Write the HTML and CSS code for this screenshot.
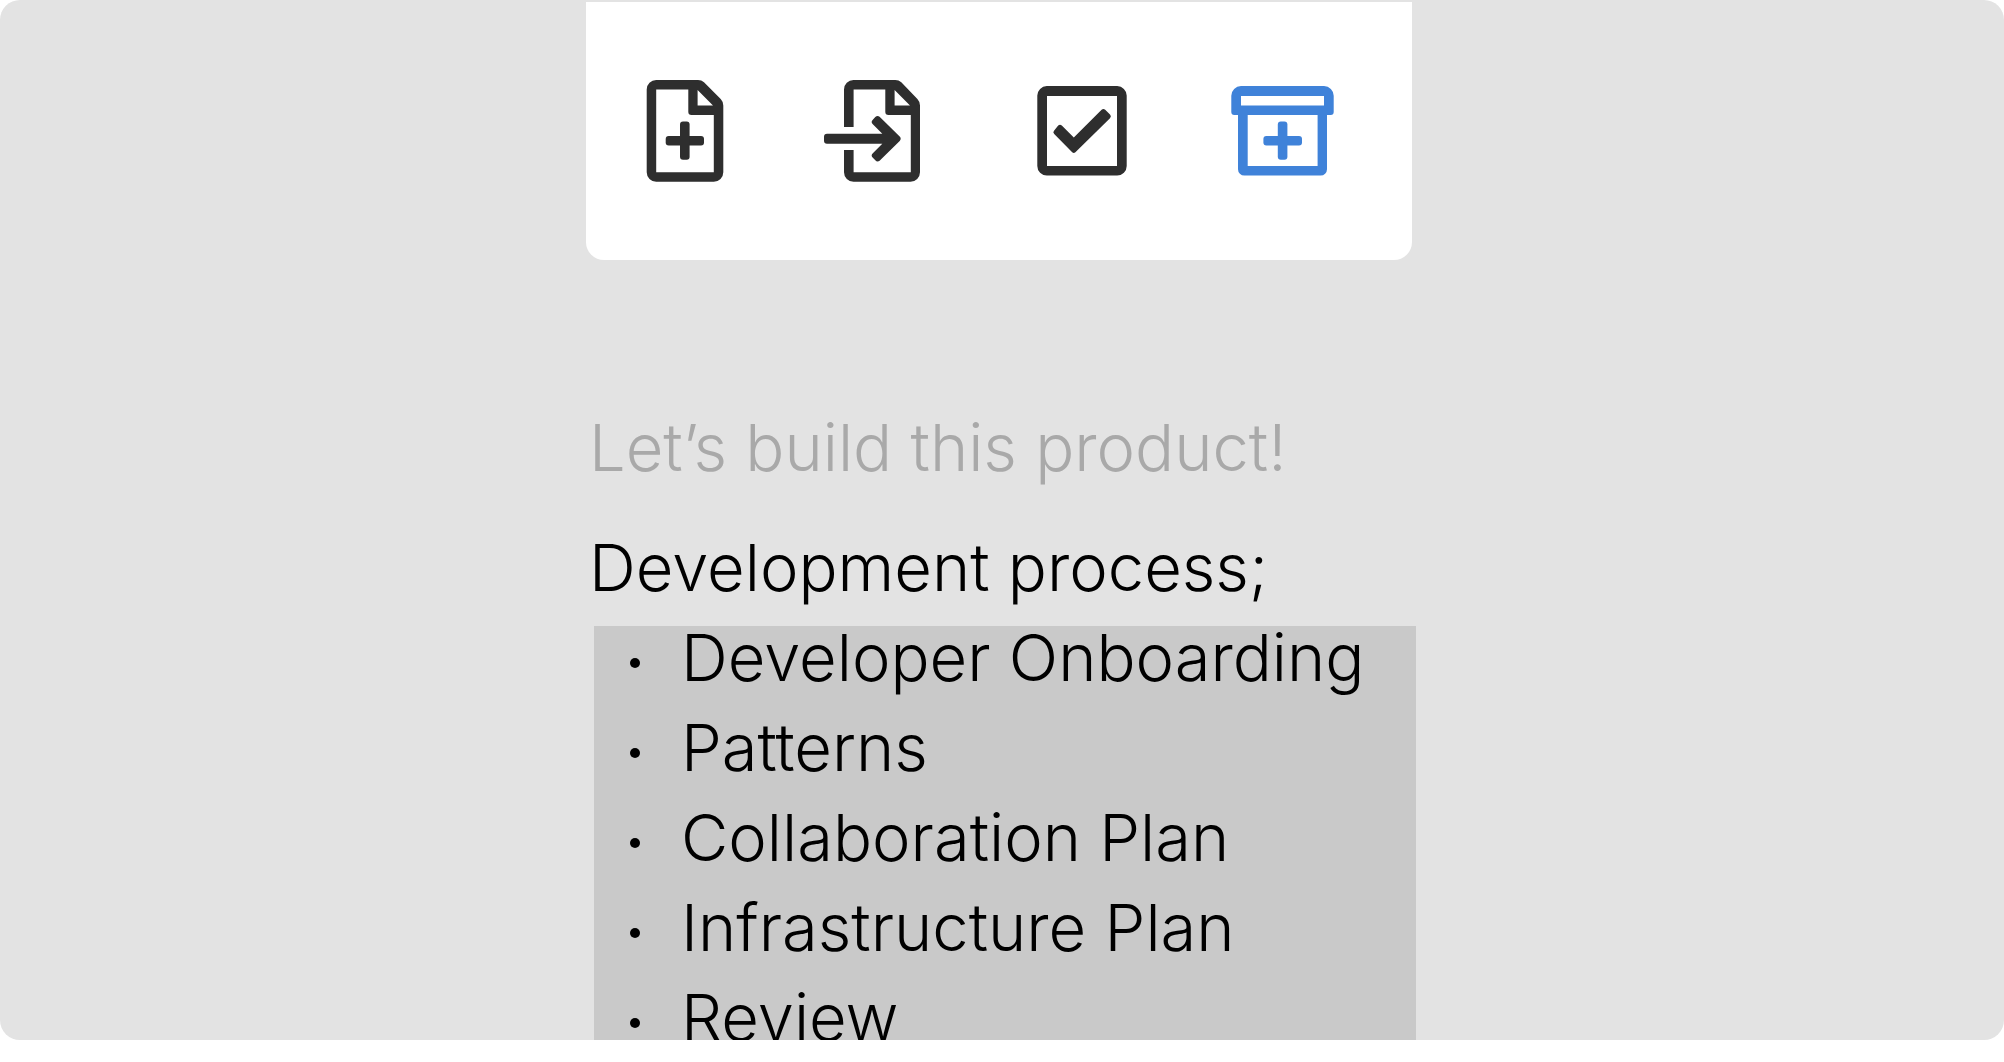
FILE: index.html
```html
<!DOCTYPE html>
<html lang="en">
<head>
  <meta charset="UTF-8" />
  <meta name="viewport" content="width=device-width,initial-scale=1.0" />
  <title>Let’s build this product!</title>
  <link rel="stylesheet" href="styles.css">
</head>

<body>
  <main class="canvas">
    <div class="column">

      <!-- Toolbar -->
      <div class="toolbar" role="toolbar" aria-label="Document actions">
        <button class="tool" type="button" aria-label="New document">
          <svg viewBox="0 0 128 128" aria-hidden="true">
            <path fill-rule="evenodd" d="M36.2 13H78Q81.5 13 84 15.3L100.7 32Q103.3 34.7 103.3 38.5V105.2A9.5 9.5 0 0 1 93.8 114.7H36.2A9.5 9.5 0 0 1 26.7 105.2V22.5A9.5 9.5 0 0 1 36.2 13ZM36.2 22.5V105.2H93.8V48H71.5A3.2 3.2 0 0 1 68.3 44.8V22.5ZM77.6 23V38.5H93Z"/>
            <rect x="45.7" y="69" width="38.3" height="9.6" rx="3"/>
            <rect x="60" y="54.5" width="9.6" height="38.3" rx="3"/>
          </svg>
        </button>
        <button class="tool" type="button" aria-label="Import document">
          <svg viewBox="0 0 128 128" aria-hidden="true">
            <path fill-rule="evenodd" d="M24 60V22.5A9.5 9.5 0 0 1 33.5 13H75.3Q78.8 13 81.3 15.3L97.4 32Q100 34.7 100 38.5V105.2A9.5 9.5 0 0 1 90.5 114.7H33.5A9.5 9.5 0 0 1 24 105.2V83H33.6V105.2H90.8V48H68.5A3.2 3.2 0 0 1 65.3 44.8V22.5H33.6V60ZM74.6 23V38.5H90Z"/>
            <path d="M7 66.7H62.3L52.6 57Q50.7 55 52.6 53L55.3 50.1Q57.3 47.9 59.6 49.7L79.7 69.5Q81.7 71.7 79.7 73.9L59.6 93.7Q57.3 95.5 55.3 93.3L52.6 90.4Q50.7 88.4 52.6 86.4L62.3 76.7H7Q4 76.7 4 73.7V69.7Q4 66.7 7 66.7Z"/>
          </svg>
        </button>
        <button class="tool" type="button" aria-label="Mark as done">
          <svg viewBox="0 0 128 128" aria-hidden="true">
            <path fill-rule="evenodd" d="M26.8 19.1H97.2A9.5 9.5 0 0 1 106.7 28.6V99.1A9.5 9.5 0 0 1 97.2 108.6H26.8A9.5 9.5 0 0 1 17.3 99.1V28.6A9.5 9.5 0 0 1 26.8 19.1ZM27 29V99H97V29Z"/>
            <path d="M38.2 58.6Q40 56.8 41.8 58.6L53.8 70.6L81.6 42.8Q83.4 41 85.2 42.8L90 47.6Q91.8 49.4 90 51.2L55.4 85.3Q53.8 86.9 52.2 85.3L34.2 67Q32.4 65.2 34.2 63.4Z"/>
          </svg>
        </button>
        <button class="tool active" type="button" aria-label="Add to archive">
          <svg viewBox="0 0 128 128" aria-hidden="true">
            <path fill-rule="evenodd" d="M21 19.1H104A9.7 9.7 0 0 1 113.7 28.8V45A3 3 0 0 1 110.7 48H107V102.2A6.4 6.4 0 0 1 100.6 108.6H24.4A6.4 6.4 0 0 1 18 102.2V48H14.3A3 3 0 0 1 11.3 45V28.8A9.7 9.7 0 0 1 21 19.1ZM21 29V38.6H104V29ZM27.7 48V99H97.6V48Z"/>
            <rect x="43.4" y="69" width="38.6" height="9.6" rx="3"/>
            <rect x="57.8" y="54.5" width="9.6" height="38.3" rx="3"/>
          </svg>
        </button>
      </div>

      <!-- Note -->
      <h1 class="title">Let’s build this product!</h1>
      <p class="lead">Development process;</p>
      <ul class="steps">
        <li>Developer Onboarding</li>
        <li>Patterns</li>
        <li>Collaboration Plan</li>
        <li>Infrastructure Plan</li>
        <li>Review</li>
      </ul>

    </div>
  </main>
</body>
</html>
```

FILE: styles.css
```css
:root {
  --bg: #e3e3e3;
  --selected: #c9c9c9;
  --icon: #2e2e2e;
  --accent: #3f82d9;
  --muted: #a9a9a9;
}
*{box-sizing:border-box;}
body{
  margin:0;
  background:#fff;
  color:#000;
  font-family:Inter,"Open Sans",sans-serif;
  font-size:65px;
  font-weight:350;
  line-height:64px;
}

.canvas{
  height:calc(100vh - 22px);
  padding-top:2px;
  overflow:hidden;
  background:var(--bg);
  border-radius:20px;
}
.column{
  max-width:832px;
  margin:0 auto;
}

/* Toolbar */
.toolbar{
  display:flex;
  justify-content:space-between;
  margin-right:6px;
  padding:65px 64px 65px 34px;
  background:#fff;
  border-radius:0 0 18px 18px;
}
.tool{
  flex:0 1 128px;
  padding:0;
  border:0;
  background:none;
  color:var(--icon);
  cursor:pointer;
}
.tool.active{color:var(--accent);}
.tool svg{
  display:block;
  width:100%;
  fill:currentColor;
}

/* Note */
.title,
.lead{
  margin:0;
  padding-left:3px;
  font-size:inherit;
  font-weight:inherit;
}
.title{
  margin-top:156px;
  color:var(--muted);
}
.lead{margin-top:56px;}

.steps{
  display:flex;
  flex-direction:column;
  gap:26px;
  margin:26px 2px 0 8px;
  padding:0 0 26px 36px;
  list-style:none;
  background:var(--selected);
}
.steps li{
  display:flex;
  align-items:center;
  gap:41px;
  white-space:nowrap;
}
.steps li::before{
  content:"";
  width:10px;
  height:10px;
  margin-top:10px;
  border-radius:50%;
  background:#000;
}
```
